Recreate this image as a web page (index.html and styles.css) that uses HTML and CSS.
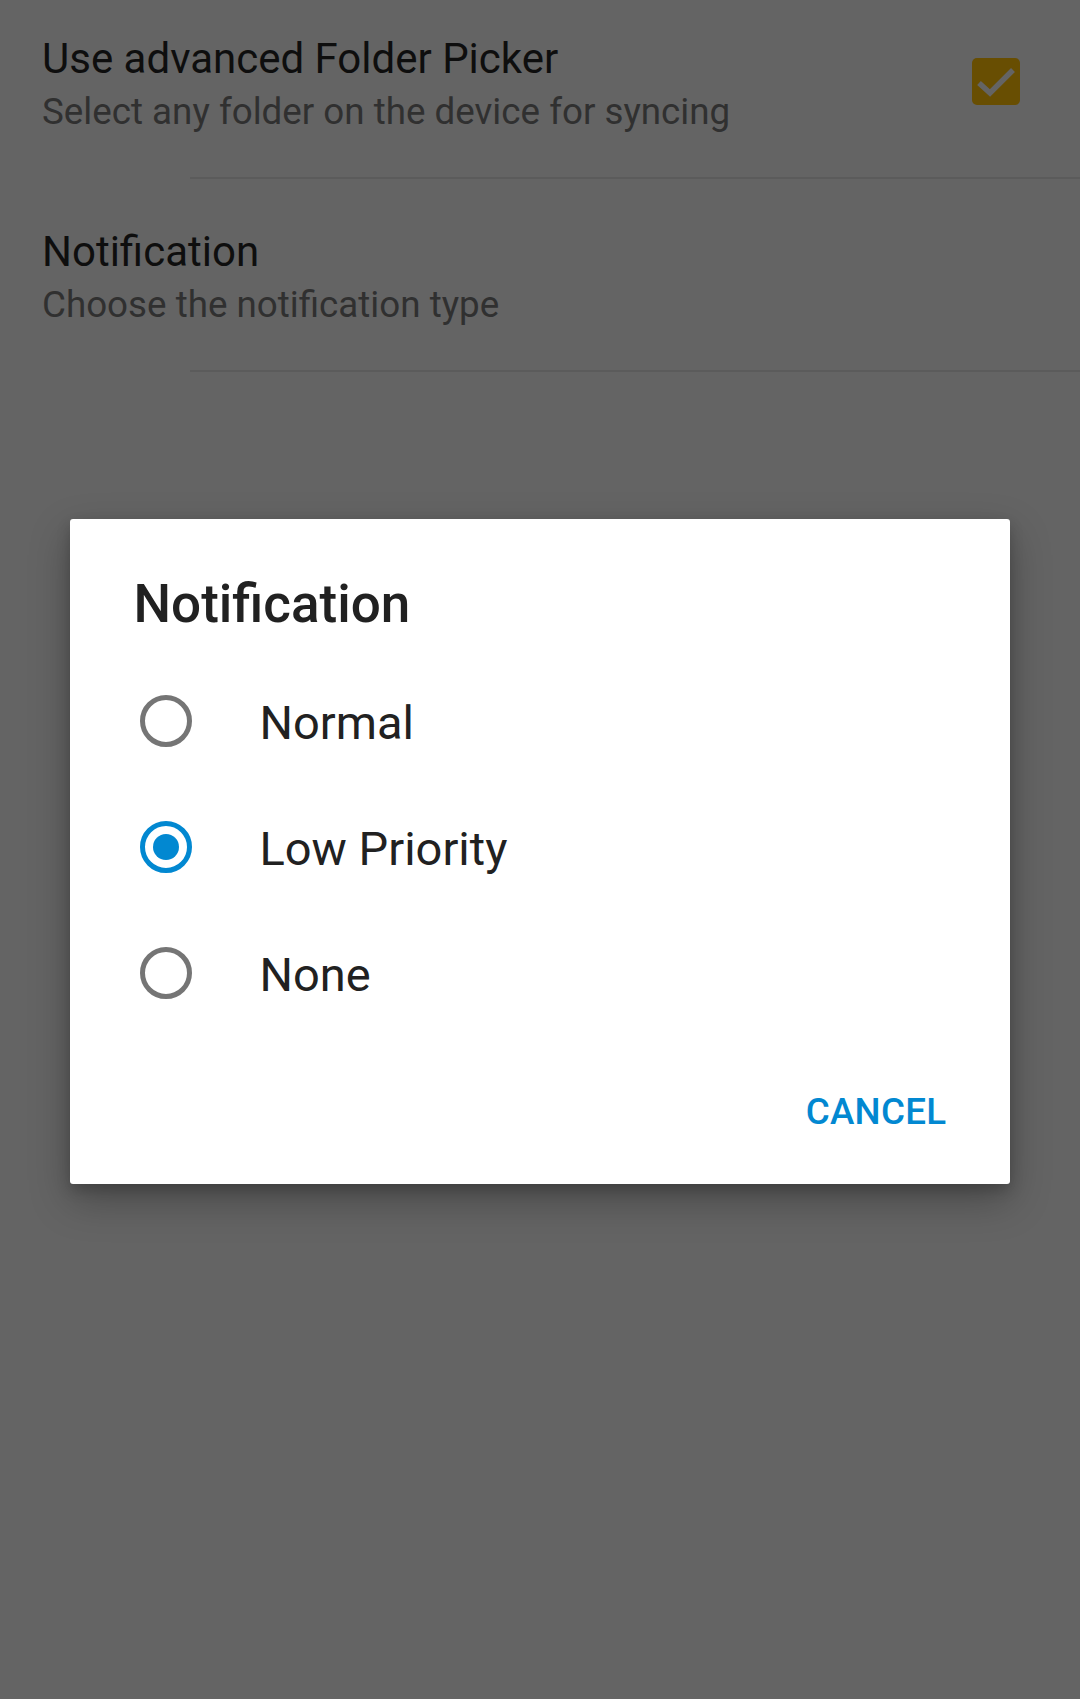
FILE: index.html
```html
<!DOCTYPE html>
<html lang="en">
<head>
<meta charset="utf-8">
<title>Notification</title>
<link rel="stylesheet" href="styles.css">
</head>
<body>
<div class="screen">
  <div class="prefs">
    <div class="pref pref-first">
      <div class="pref-text">
        <div class="pref-title">Use advanced Folder Picker</div>
        <div class="pref-summary">Select any folder on the device for syncing</div>
      </div>
      <svg class="checkbox" width="48" height="48" viewBox="0 0 48 48">
        <rect x="0" y="0" width="48" height="47" rx="5" fill="#684e02"/>
        <polyline points="7,25 18,35 41,12" fill="none" stroke="#646464" stroke-width="5.5"/>
      </svg>
    </div>
    <div class="divider"></div>
    <div class="pref">
      <div class="pref-text">
        <div class="pref-title">Notification</div>
        <div class="pref-summary">Choose the notification type</div>
      </div>
    </div>
    <div class="divider"></div>
  </div>

  <div class="scrim">
    <div class="dialog">
      <div class="dialog-title">Notification</div>
      <div class="options">
        <div class="option">
          <svg class="radio" width="52" height="52" viewBox="0 0 52 52">
            <circle cx="26" cy="26" r="23.5" fill="none" stroke="#757575" stroke-width="5"/>
          </svg>
          <span class="option-label">Normal</span>
        </div>
        <div class="option">
          <svg class="radio" width="52" height="52" viewBox="0 0 52 52">
            <circle cx="26" cy="26" r="23.5" fill="none" stroke="#0288d1" stroke-width="5"/>
            <circle cx="26" cy="26" r="13" fill="#0288d1"/>
          </svg>
          <span class="option-label">Low Priority</span>
        </div>
        <div class="option">
          <svg class="radio" width="52" height="52" viewBox="0 0 52 52">
            <circle cx="26" cy="26" r="23.5" fill="none" stroke="#757575" stroke-width="5"/>
          </svg>
          <span class="option-label">None</span>
        </div>
      </div>
      <div class="actions">
        <span class="btn">CANCEL</span>
      </div>
    </div>
  </div>
</div>
</body>
</html>
```

FILE: styles.css
```css
html, body {
  margin: 0;
  padding: 0;
}
body {
  background: #646464;
  font-family: Roboto, "Noto Sans", "Liberation Sans", sans-serif;
}
.screen {
  position: relative;
  width: 1080px;
  height: 1699px;
  overflow: hidden;
  background: #646464;
}
.prefs {
  display: flex;
  flex-direction: column;
}
.pref {
  display: flex;
  align-items: center;
  padding: 48px 60px 40px 42px;
}
.pref-first {
  padding-top: 34px;
  align-items: flex-start;
}
.pref-text {
  flex: 1;
  display: flex;
  flex-direction: column;
}
.pref-title {
  font-size: 42px;
  line-height: 50px;
  color: #0e0e0e;
}
.pref-summary {
  margin-top: 2px;
  font-size: 36.75px;
  line-height: 51px;
  color: #303030;
}
.checkbox {
  display: block;
  flex: none;
  margin-top: 24px;
}
.divider {
  height: 2px;
  margin-left: 190px;
  background: #5b5b5b;
}

.scrim {
  position: absolute;
  inset: 0;
  display: flex;
  align-items: flex-start;
  justify-content: center;
  padding-top: 519px;
  box-sizing: border-box;
}
.dialog {
  width: 940px;
  margin-left: -1px;
  background: #ffffff;
  border-radius: 3px;
  box-shadow: 0 16px 40px rgba(0, 0, 0, 0.28), 0 6px 14px rgba(0, 0, 0, 0.18);
  padding: 53px 0 52px 0;
  box-sizing: border-box;
}
.dialog-title {
  padding-left: 64px;
  font-size: 53px;
  line-height: 64px;
  font-weight: 500;
  color: #212121;
}
.options {
  margin-top: 22px;
  display: flex;
  flex-direction: column;
}
.option {
  height: 126px;
  display: flex;
  align-items: center;
  padding-left: 70px;
}
.radio {
  display: block;
  flex: none;
}
.option-label {
  margin-left: 68px;
  font-size: 47px;
  line-height: 56px;
  padding-top: 4px;
  color: #212121;
}
.actions {
  margin-top: 56px;
  display: flex;
  justify-content: flex-end;
  padding-right: 63px;
}
.btn {
  font-size: 36.75px;
  line-height: 40px;
  font-weight: 500;
  color: #0288d1;
  letter-spacing: 0.3px;
}
```
